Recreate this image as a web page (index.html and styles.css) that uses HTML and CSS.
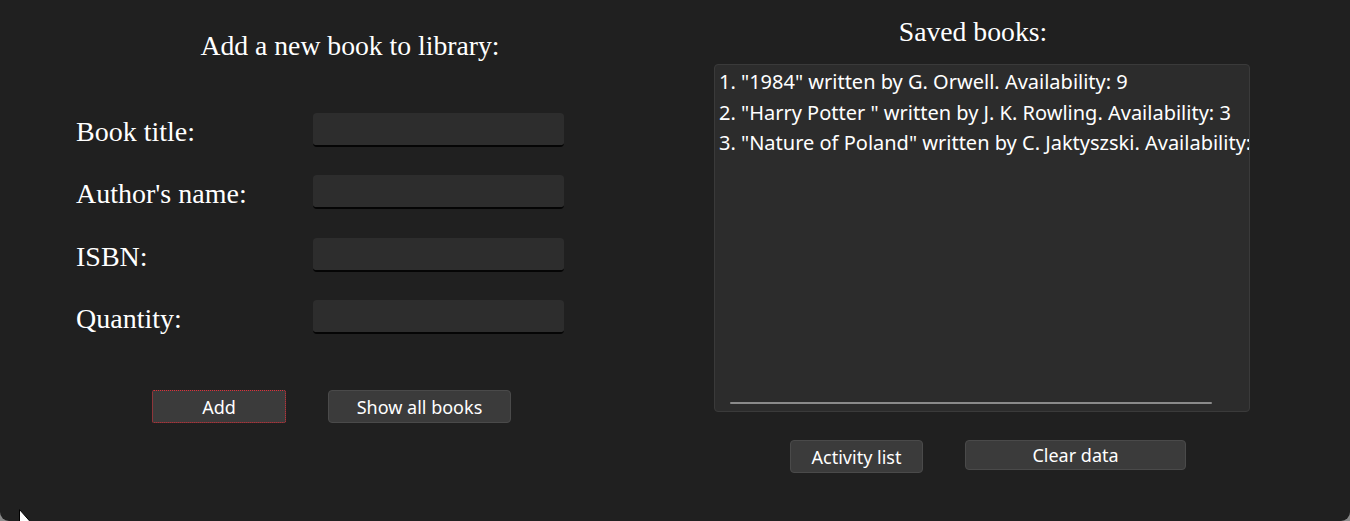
FILE: index.html
```html
<!DOCTYPE html>
<html>
<head>
<meta charset="utf-8">
<link rel="stylesheet" href="styles.css">
</head>
<body>
<div class="window">
  <section class="left">
    <h1 class="title">Add a new book to library:</h1>
    <div class="form">
      <div class="row"><label class="label">Book title:</label><div class="input"></div></div>
      <div class="row"><label class="label">Author's name:</label><div class="input"></div></div>
      <div class="row"><label class="label">ISBN:</label><div class="input"></div></div>
      <div class="row"><label class="label">Quantity:</label><div class="input"></div></div>
    </div>
    <div class="actions">
      <button class="btn btn-add focused">Add</button>
      <button class="btn btn-show">Show all books</button>
    </div>
  </section>
  <section class="right">
    <h2 class="title title-right">Saved books:</h2>
    <div class="listbox">
      <ul class="list">
        <li>1. "1984" written by G. Orwell. Availability: 9</li>
        <li>2. "Harry Potter " written by J. K. Rowling. Availability: 3</li>
        <li>3. "Nature of Poland" written by C. Jaktyszski. Availability:</li>
      </ul>
      <div class="hscroll"></div>
    </div>
    <div class="actions actions-right">
      <button class="btn btn-activity">Activity list</button>
      <button class="btn btn-clear">Clear data</button>
    </div>
  </section>
  <svg class="cursor" width="14" height="14" viewBox="0 0 14 14"><path d="M0.5 0.5 L0.5 13.5 L12 13.5 Z" fill="#fff" stroke="#000" stroke-width="1"/></svg>
</div>
</body>
</html>
```

FILE: styles.css
```css
html, body {
  margin: 0;
  padding: 0;
  width: 1350px;
  height: 521px;
  overflow: hidden;
  background: #8a8a8a;
}
.window {
  position: relative;
  width: 1350px;
  height: 521px;
  background: #202020;
  border-radius: 0 0 9px 9px;
  display: flex;
  overflow: hidden;
}
.left {
  width: 714px;
  box-sizing: border-box;
  padding-top: 30px;
}
.title {
  margin: 0;
  font-family: "Liberation Serif", serif;
  font-weight: normal;
  font-size: 27.7px;
  line-height: 32px;
  color: #ffffff;
  text-align: center;
  width: 700px;
}
.form {
  margin-top: 51px;
  padding-left: 76px;
  display: flex;
  flex-direction: column;
  gap: 28.4px;
}
.row {
  display: flex;
  height: 34px;
}
.label {
  width: 237px;
  font-family: "Liberation Serif", serif;
  font-size: 28px;
  line-height: 32px;
  padding-top: 3px;
  color: #ffffff;
}
.input {
  width: 251px;
  height: 32px;
  background: #2d2d2d;
  border-radius: 4px;
  border-bottom: 2px solid #050505;
  box-sizing: content-box;
}
.actions {
  margin-top: 56px;
  padding-left: 152px;
  display: flex;
  gap: 42px;
  align-items: flex-start;
}
.btn {
  font-family: "Noto Sans", sans-serif;
  font-size: 18px;
  color: #ffffff;
  background: #3b3b3b;
  border: 1px solid #4a4a4a;
  border-radius: 4px;
  height: 33px;
  padding: 2px 0 0 0;
  line-height: 29px;
  box-sizing: border-box;
}
.btn-add { width: 134px; }
.btn-show { width: 183px; }
.focused {
  border: 1px dotted #e0303a;
  border-radius: 2px;
}
.right {
  width: 536px;
  padding-top: 16px;
}
.title-right {
  width: 536px;
  box-sizing: border-box;
  padding-right: 18px;
}
.listbox {
  margin-top: 16px;
  height: 348px;
  box-sizing: border-box;
  background: #2c2c2c;
  border: 1px solid #3a3a3a;
  border-radius: 4px;
  position: relative;
  overflow: hidden;
  display: flex;
  flex-direction: column;
}
.list {
  list-style: none;
  margin: 0;
  padding: 2px 0 0 4px;
  flex: 1;
  font-family: "Noto Sans", sans-serif;
  font-size: 20px;
  line-height: 30.7px;
  color: #ffffff;
  white-space: nowrap;
}
.hscroll {
  height: 2px;
  margin: 0 37px 7px 15px;
  background: #8b8b8b;
  border-radius: 1px;
}
.actions-right {
  margin-top: 28px;
  padding-left: 76px;
}
.btn-activity { width: 133px; }
.btn-clear { width: 221px; height: 30px; line-height: 27px; padding-top: 1px; }
.cursor {
  position: absolute;
  left: 19px;
  top: 509px;
}
```
